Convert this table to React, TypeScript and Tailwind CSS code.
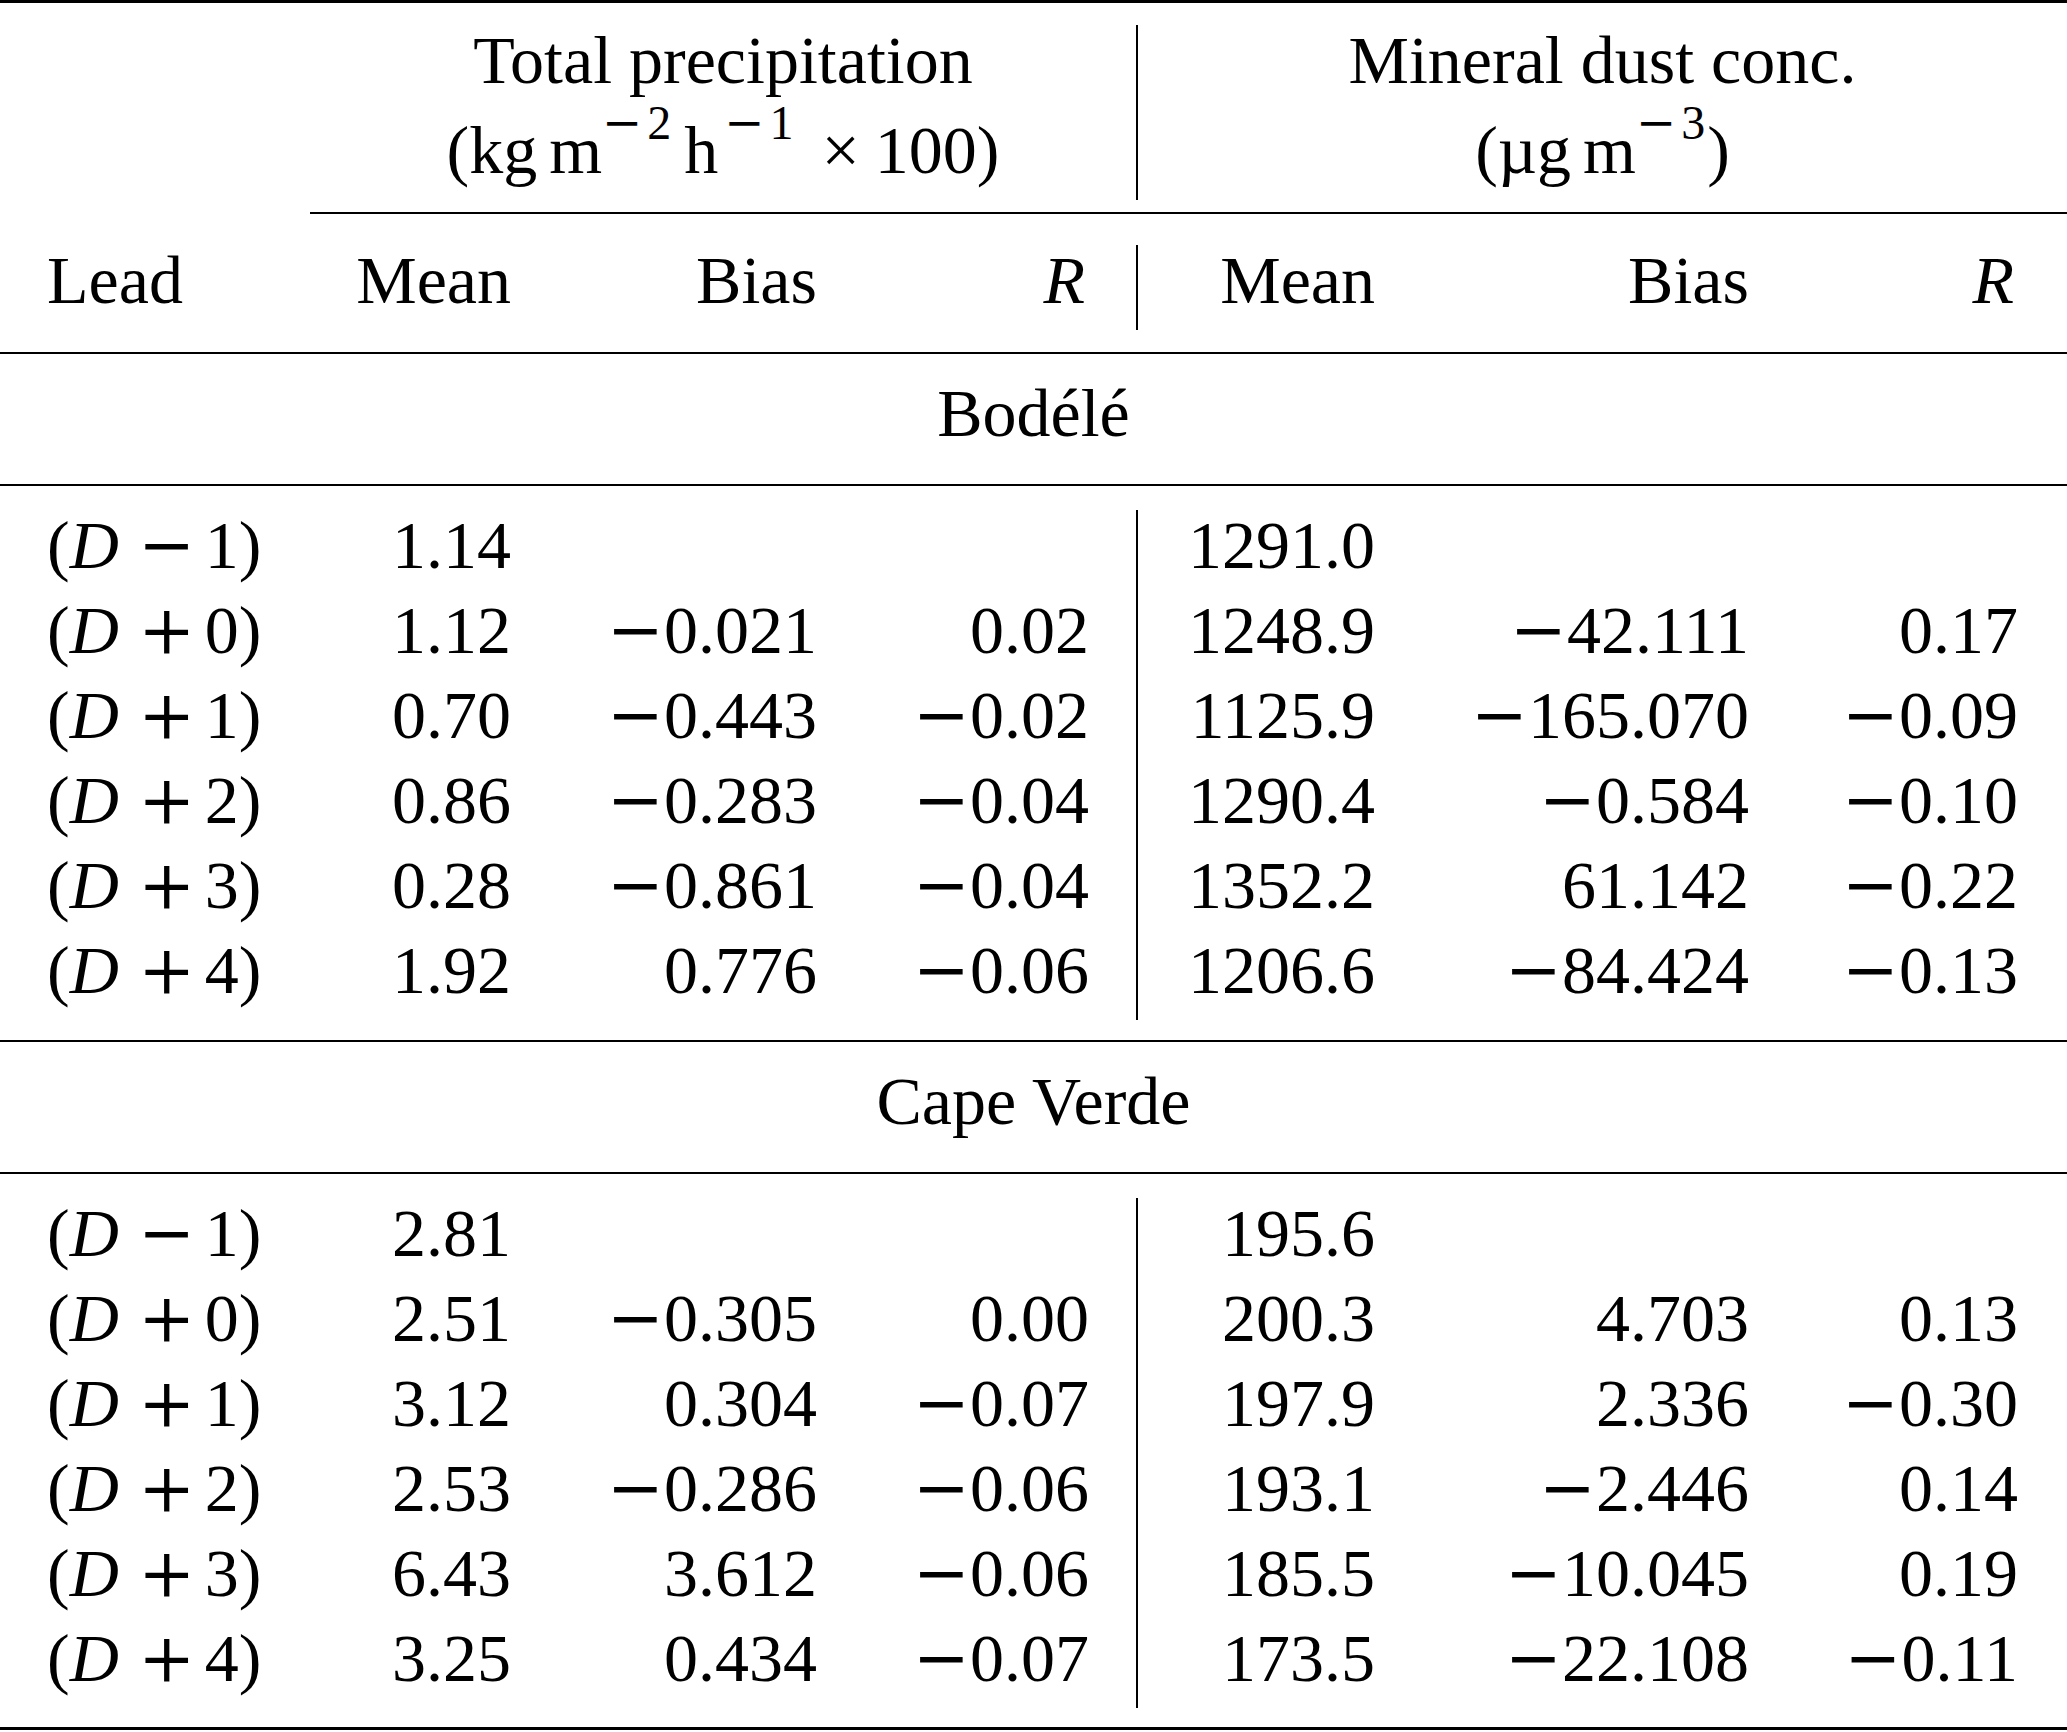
type Row = {
  op: string;
  n: string;
  pm: string;
  pb: string;
  pr: string;
  dm: string;
  db: string;
  dr: string;
};

const bodele: Row[] = [
  { op: "−", n: "1", pm: "1.14", pb: "", pr: "", dm: "1291.0", db: "", dr: "" },
  { op: "+", n: "0", pm: "1.12", pb: "−0.021", pr: "0.02", dm: "1248.9", db: "−42.111", dr: "0.17" },
  { op: "+", n: "1", pm: "0.70", pb: "−0.443", pr: "−0.02", dm: "1125.9", db: "−165.070", dr: "−0.09" },
  { op: "+", n: "2", pm: "0.86", pb: "−0.283", pr: "−0.04", dm: "1290.4", db: "−0.584", dr: "−0.10" },
  { op: "+", n: "3", pm: "0.28", pb: "−0.861", pr: "−0.04", dm: "1352.2", db: "61.142", dr: "−0.22" },
  { op: "+", n: "4", pm: "1.92", pb: "0.776", pr: "−0.06", dm: "1206.6", db: "−84.424", dr: "−0.13" },
];

const capeVerde: Row[] = [
  { op: "−", n: "1", pm: "2.81", pb: "", pr: "", dm: "195.6", db: "", dr: "" },
  { op: "+", n: "0", pm: "2.51", pb: "−0.305", pr: "0.00", dm: "200.3", db: "4.703", dr: "0.13" },
  { op: "+", n: "1", pm: "3.12", pb: "0.304", pr: "−0.07", dm: "197.9", db: "2.336", dr: "−0.30" },
  { op: "+", n: "2", pm: "2.53", pb: "−0.286", pr: "−0.06", dm: "193.1", db: "−2.446", dr: "0.14" },
  { op: "+", n: "3", pm: "6.43", pb: "3.612", pr: "−0.06", dm: "185.5", db: "−10.045", dr: "0.19" },
  { op: "+", n: "4", pm: "3.25", pb: "0.434", pr: "−0.07", dm: "173.5", db: "−22.108", dr: "−0.11" },
];

// math minus: DejaVu's glyph is closer to the wide TeX minus
function Num({ v }: { v: string }) {
  if (v.startsWith("−")) {
    return (
      <>
        <span className="font-['DejaVu_Serif',serif] leading-[0]">−</span>
        {v.slice(1)}
      </>
    );
  }
  return <>{v}</>;
}

function Sup({ v }: { v: string }) {
  return (
    <span className="text-[48px] leading-[0] align-[34px]">
      <span className="font-['DejaVu_Serif',serif]">−</span>
      <span className="ml-[5px]">{v}</span>
    </span>
  );
}

function Lead({ op, n }: { op: string; n: string }) {
  return (
    <span className="whitespace-nowrap">
      (<i>D</i>
      <span className="inline-block w-[86px] pl-[10px] text-center font-['DejaVu_Serif',serif] leading-[0]">{op}</span>
      {n})
    </span>
  );
}

const cols = "grid h-[85px] grid-cols-[310px_201px_306px_272px_47px_239px_374px_269px_49px] leading-[70px]";

function DataRow({ r }: { r: Row }) {
  return (
    <div className={cols}>
      <div className="pl-[47px]">
        <Lead op={r.op} n={r.n} />
      </div>
      <div className="text-right">{r.pm}</div>
      <div className="text-right">
        <Num v={r.pb} />
      </div>
      <div className="text-right">
        <Num v={r.pr} />
      </div>
      <div />
      <div className="border-l-2 border-black text-right">{r.dm}</div>
      <div className="text-right">
        <Num v={r.db} />
      </div>
      <div className="text-right">
        <Num v={r.dr} />
      </div>
      <div />
    </div>
  );
}

export default function App() {
  return (
    <div className="w-[2067px] h-[1732px] bg-white text-black text-[68px] font-['Liberation_Serif','Times_New_Roman',serif]">
      <div className="h-[3px] bg-black" />

      {/* Group headings */}
      <div className="grid grid-cols-[310px_826px_931px] pt-[22px] pb-[12px]">
        <div />
        <div className="pb-[15px] text-center leading-[70px] whitespace-nowrap">
          <div>Total precipitation</div>
          <div className="mt-[20px]">
            (kg<span className="ml-[12px]">m</span>
            <Sup v="2" />
            <span className="ml-[13px] mr-[6px]">h</span>
            <Sup v="1" />
            <span className="ml-[28px] mr-[15px]">×</span>
            100)
          </div>
        </div>
        <div className="border-l-2 border-black pb-[15px] text-center leading-[70px] whitespace-nowrap">
          <div>Mineral dust conc.</div>
          <div className="mt-[20px]">
            (µg<span className="ml-[12px]">m</span>
            <Sup v="3" />
            <span className="ml-[2px]">)</span>
          </div>
        </div>
      </div>
      <div className="ml-[310px] h-[2px] bg-black" />

      {/* Column headings */}
      <div className="pt-[31px] pb-[22px]">
        <div className={cols}>
          <div className="pl-[47px]">Lead</div>
          <div className="text-right">Mean</div>
          <div className="text-right">Bias</div>
          <div className="text-right pr-[4px]">
            <i>R</i>
          </div>
          <div />
          <div className="border-l-2 border-black text-right">Mean</div>
          <div className="text-right">Bias</div>
          <div className="text-right pr-[4px]">
            <i>R</i>
          </div>
          <div />
        </div>
      </div>
      <div className="h-[2px] bg-black" />

      <div className="pt-[24px] pb-[36px] text-center leading-[70px]">Bodélé</div>
      <div className="h-[2px] bg-black" />
      <div className="pt-[24px] pb-[20px]">
        {bodele.map((r) => (
          <DataRow key={r.op + r.n} r={r} />
        ))}
      </div>
      <div className="h-[2px] bg-black" />

      <div className="pt-[24px] pb-[36px] text-center leading-[70px]">Cape Verde</div>
      <div className="h-[2px] bg-black" />
      <div className="pt-[24px] pb-[19px]">
        {capeVerde.map((r) => (
          <DataRow key={r.op + r.n} r={r} />
        ))}
      </div>
      <div className="h-[3px] bg-black" />
    </div>
  );
}
